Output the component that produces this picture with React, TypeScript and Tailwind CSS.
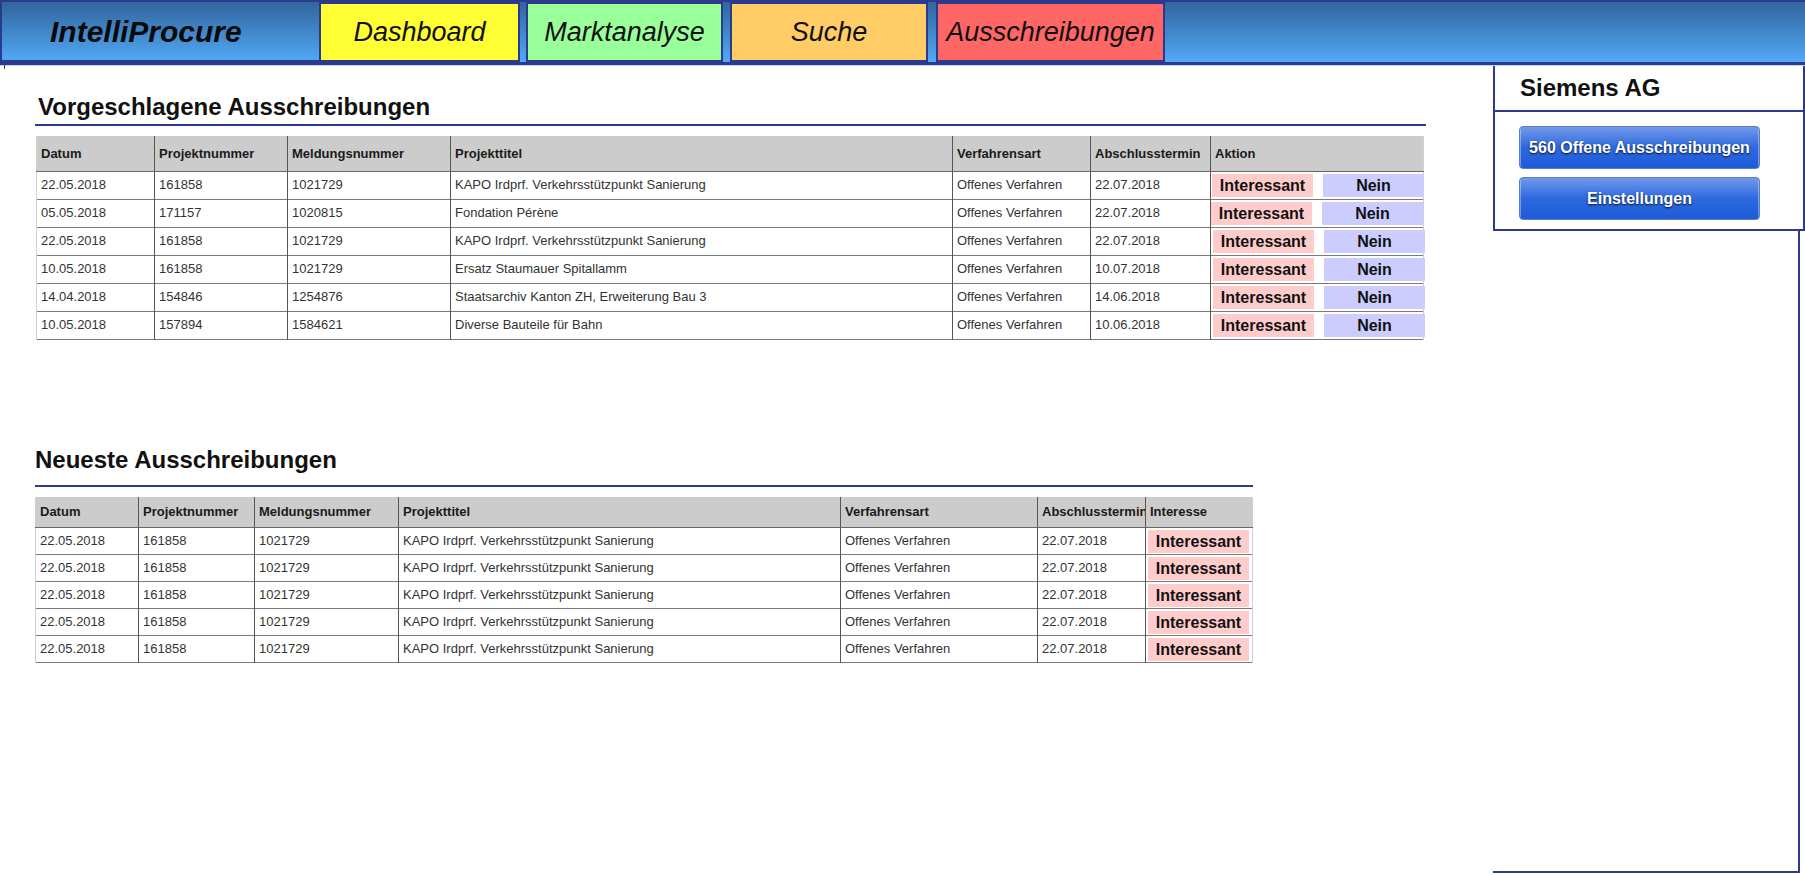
const NAVY = "border-[#2b3a8c]";

const suggested = [
  ["22.05.2018", "161858", "1021729", "KAPO Irdprf. Verkehrsstützpunkt Sanierung", "Offenes Verfahren", "22.07.2018"],
  ["05.05.2018", "171157", "1020815", "Fondation Pérène", "Offenes Verfahren", "22.07.2018"],
  ["22.05.2018", "161858", "1021729", "KAPO Irdprf. Verkehrsstützpunkt Sanierung", "Offenes Verfahren", "22.07.2018"],
  ["10.05.2018", "161858", "1021729", "Ersatz Staumauer Spitallamm", "Offenes Verfahren", "10.07.2018"],
  ["14.04.2018", "154846", "1254876", "Staatsarchiv Kanton ZH, Erweiterung Bau 3", "Offenes Verfahren", "14.06.2018"],
  ["10.05.2018", "157894", "1584621", "Diverse Bauteile für Bahn", "Offenes Verfahren", "10.06.2018"],
];

const latest = Array.from({ length: 5 }, () => [
  "22.05.2018",
  "161858",
  "1021729",
  "KAPO Irdprf. Verkehrsstützpunkt Sanierung",
  "Offenes Verfahren",
  "22.07.2018",
]);

// tiny per-row shifts of the action buttons, as in the original
const rowShift = ["ml-[1px]", "ml-0", "ml-[2px]", "ml-[2px]", "ml-[2px]", "ml-[2px]"];

function NavTab({ label, className }: { label: string; className: string }) {
  return (
    <div
      className={`flex h-full items-center justify-center border-2 ${NAVY} text-[27px] italic text-[#111] ${className}`}
    >
      {label}
    </div>
  );
}

function Header() {
  return (
    <header className="relative">
      <div className={`flex h-[65px] border-t-2 border-b-[3px] ${NAVY} bg-gradient-to-b from-[#31669c] to-[#52a9f7]`}>
        <div className={`flex h-full w-[321px] items-center border-2 border-t-0 ${NAVY} pl-[48px]`}>
          <span className="text-[30px] font-bold italic text-[#0a0a0a]">IntelliProcure</span>
        </div>
        <NavTab label="Dashboard" className="w-[199px] border-l-0 bg-[#ffff33]" />
        <NavTab label="Marktanalyse" className="ml-[6px] w-[197px] bg-[#99ff99]" />
        <NavTab label="Suche" className="ml-[7px] w-[198px] bg-[#ffcc66]" />
        <NavTab label="Ausschreibungen" className="ml-[8px] w-[229px] bg-[#ff6666]" />
      </div>
      <div className="h-px bg-[#c5cfea]" />
      <div className="absolute left-[4px] top-[65px] h-[4px] w-px bg-[#2b3a8c]" />
    </header>
  );
}

function ActionButton({ label, tone, className = "" }: { label: string; tone: "yes" | "no"; className?: string }) {
  return (
    <button
      className={`h-[23px] w-[101px] shrink-0 text-[16px] font-bold leading-[23px] text-[#111] ${
        tone === "yes" ? "bg-[#ffcccc]" : "bg-[#ccccff]"
      } ${className}`}
    >
      {label}
    </button>
  );
}

function DataTable({
  cols,
  widths,
  rows,
  headH,
  rowH,
  both,
}: {
  cols: string[];
  widths: number[];
  rows: string[][];
  headH: string;
  rowH: string;
  both: boolean;
}) {
  const total = widths.reduce((a, b) => a + b, 0);
  return (
    <table className="table-fixed border-collapse text-[13px]" style={{ width: total }}>
      <colgroup>
        {widths.map((w, i) => (
          <col key={i} style={{ width: w }} />
        ))}
      </colgroup>
      <thead>
        <tr className={`${headH} bg-[#cccccc]`}>
          {cols.map((c, i) => (
            <th
              key={c}
              className={`overflow-hidden whitespace-nowrap border-b border-[#666] pl-[4px] text-left font-bold text-[#1a1a1a] ${
                i === 0 ? "border-l border-l-[#d0d0d0]" : "border-l border-l-[#555]"
              } ${i === cols.length - 1 ? "border-r border-r-[#d0d0d0]" : ""}`}
            >
              {c}
            </th>
          ))}
        </tr>
      </thead>
      <tbody>
        {rows.map((r, ri) => (
          <tr key={ri} className={`${rowH} border-b border-[#7a7a7a]`}>
            {r.map((v, i) => (
              <td
                key={i}
                className={`overflow-hidden whitespace-nowrap pl-[4px] text-[#333] ${
                  i === 0 ? "border-l border-l-[#d0d0d0]" : "border-l border-l-[#555]"
                }`}
              >
                {v}
              </td>
            ))}
            <td className="border-l border-r border-l-[#555] border-r-[#d0d0d0] p-0 align-middle">
              <div className="flex overflow-visible whitespace-nowrap">
                <ActionButton label="Interessant" tone="yes" className={both ? rowShift[ri] : "ml-[2px]"} />
                {both && <ActionButton label="Nein" tone="no" className="ml-[10px]" />}
              </div>
            </td>
          </tr>
        ))}
      </tbody>
    </table>
  );
}

function SidePanel() {
  return (
    <aside className="-mt-[2px] w-[312px] shrink-0">
      <div className={`border-2 ${NAVY}`}>
        <div className={`flex h-[46px] items-center border-b-2 ${NAVY} pl-[25px]`}>
          <span className="text-[24px] font-bold text-[#111]">Siemens AG</span>
        </div>
        <div className="flex flex-col gap-[8px] px-[24px] pt-[14px] pb-[9px]">
          {["560 Offene Ausschreibungen", "Einstellungen"].map((t) => (
            <button
              key={t}
              className="h-[43px] w-[241px] rounded-[4px] border border-[#5b7dc4] bg-gradient-to-b from-[#7299e9] via-[#2c68df] to-[#1e5bd7] text-[16px] font-bold text-white [box-shadow:inset_6px_0_0_-5px_rgba(255,255,255,0.35),inset_-6px_0_0_-5px_rgba(255,255,255,0.35)] [text-shadow:0_1px_2px_rgba(0,0,0,0.85)]"
            >
              {t}
            </button>
          ))}
        </div>
      </div>
      <div className={`h-[642px] w-[307px] border-r-2 border-b-2 ${NAVY}`} />
    </aside>
  );
}

export default function App() {
  return (
    <div className="min-h-[875px] w-full overflow-hidden bg-white font-['Liberation_Sans',Arial,sans-serif]">
      <Header />
      <div className="flex">
        <main className="flex-1">
          <section>
            <h2 className="ml-[38px] mt-[27px] text-[24px] font-bold leading-[28px] text-[#111]">
              Vorgeschlagene Ausschreibungen
            </h2>
            <div className="ml-[35px] mt-[3px] h-[2px] w-[1391px] bg-[#2b3a8c]" />
            <div className="ml-[36px] mt-[10px]">
              <DataTable
                cols={["Datum", "Projektnummer", "Meldungsnummer", "Projekttitel", "Verfahrensart", "Abschlusstermin", "Aktion"]}
                widths={[118, 133, 163, 502, 138, 120, 213]}
                rows={suggested}
                headH="h-[35px]"
                rowH="h-[28px]"
                both
              />
            </div>
          </section>
          <section>
            <h2 className="ml-[35px] mt-[106px] text-[24px] font-bold leading-[28px] text-[#111]">
              Neueste Ausschreibungen
            </h2>
            <div className="ml-[35px] mt-[11px] h-[2px] w-[1218px] bg-[#2b3a8c]" />
            <div className="ml-[35px] mt-[10px]">
              <DataTable
                cols={["Datum", "Projektnummer", "Meldungsnummer", "Projekttitel", "Verfahrensart", "Abschlusstermin", "Interesse"]}
                widths={[103, 116, 144, 442, 197, 108, 107]}
                rows={latest}
                headH="h-[31px]"
                rowH="h-[27px]"
                both={false}
              />
            </div>
          </section>
        </main>
        <SidePanel />
      </div>
    </div>
  );
}
